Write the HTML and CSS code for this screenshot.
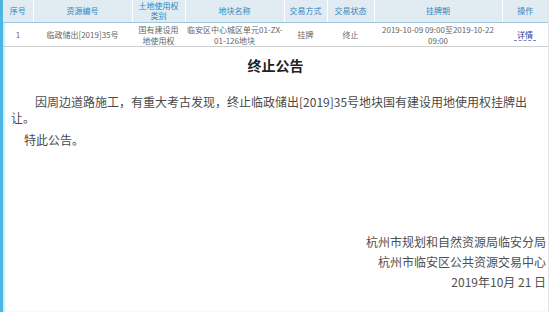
FILE: index.html
```html
<!DOCTYPE html>
<html lang="zh-CN">
<head>
  <meta charset="UTF-8">
  <title>终止公告</title>
  <link rel="stylesheet" href="styles.css">
</head>
<body>
  <div class="page">
    <table class="deal-table">
      <colgroup>
        <col style="width:30px"><col style="width:99px"><col style="width:53px"><col style="width:99px">
        <col style="width:43px"><col style="width:47px"><col style="width:128px"><col style="width:46px">
      </colgroup>
      <thead>
        <tr>
          <th>序号</th>
          <th>资源编号</th>
          <th>土地使用权<br>类别</th>
          <th>地块名称</th>
          <th>交易方式</th>
          <th>交易状态</th>
          <th>挂牌期</th>
          <th>操作</th>
        </tr>
      </thead>
      <tbody>
        <tr>
          <td>1</td>
          <td>临政储出[2019]35号</td>
          <td>国有建设用<br>地使用权</td>
          <td>临安区中心城区单元01-ZX-<br>01-126地块</td>
          <td>挂牌</td>
          <td>终止</td>
          <td>2019-10-09 09:00至2019-10-22<br>09:00</td>
          <td><a class="detail" href="#">详情</a></td>
        </tr>
      </tbody>
    </table>

    <div class="notice">
      <h1 class="notice-title">终止公告</h1>
      <p class="notice-text">因周边道路施工，有重大考古发现，终止临政储出[2019]35号地块国有建设用地使用权挂牌出让。</p>
      <p class="notice-end">特此公告。</p>

      <div class="sign">
        <div>杭州市规划和自然资源局临安分局</div>
        <div>杭州市临安区公共资源交易中心</div>
        <div>2019年10月 21 日</div>
      </div>
    </div>
  </div>
</body>
</html>
```

FILE: styles.css
```css
html, body { margin:0; padding:0; height:100%; }
body {
  background:#fff;
  font-family:"Noto Sans CJK SC", sans-serif;
  overflow:hidden;
}
.page {
  width:545px;
  height:100%;
  border-left:3px solid #4cb6e2;
  border-right:1px solid #e4e4e4;
  box-shadow:inset 2px 0 2px #c9ecf8;
}

/* table */
.deal-table {
  width:545px;
  border-collapse:collapse;
  table-layout:fixed;
  font-size:8px;
  border-bottom:1px solid #cfcfcf;
}
.deal-table th {
  height:22px;
  padding:0 2px;
  background:#e1ebf2;
  color:#2d88c2;
  font-weight:normal;
  line-height:10px;
  border-left:1px solid #fff;
  border-bottom:1px solid #9cc6df;
}
.deal-table th:first-child { border-left:none; }
.deal-table td {
  height:23px;
  padding:0 2px;
  text-align:center;
  color:#666;
  line-height:11px;
  white-space:nowrap;
}
.detail {
  color:#2a3c9e;
  text-decoration:none;
  border-bottom:1px dashed #7f8ac0;
  padding:0 3px;
}

/* notice */
.notice {
  padding:0 8px;
  color:#4a4a4a;
}
.notice-title {
  margin:8px 0 0;
  text-align:center;
  font-size:14px;
  line-height:20px;
  font-weight:bold;
  color:#222;
}
.notice-text {
  width:528px;
  margin:19px 0 0;
  font-size:12px;
  line-height:16px;
  text-indent:24px;
}
.notice-end {
  margin:6px 0 0;
  font-size:12px;
  line-height:16px;
  text-indent:13px;
}
.sign {
  margin:84px -6px 0 0;
  text-align:right;
  font-size:12px;
  line-height:20px;
  color:#505050;
}
```
